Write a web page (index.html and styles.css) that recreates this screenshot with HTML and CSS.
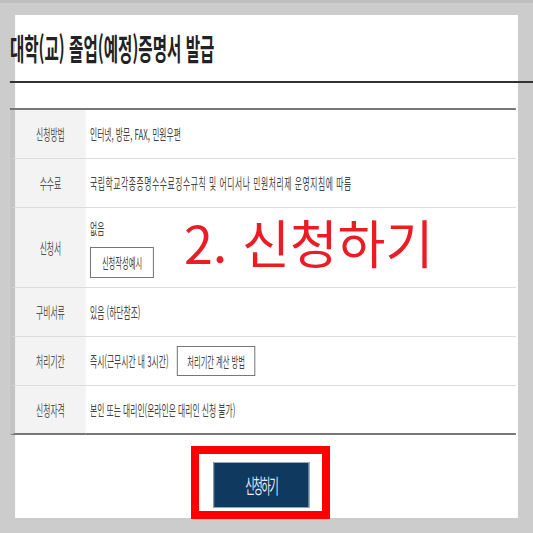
FILE: index.html
```html
<!DOCTYPE html>
<html lang="ko">
  <head>
    <meta charset="UTF-8" />
    <meta name="viewport" content="width=device-width, initial-scale=1.0" />
    <title>대학(교) 졸업(예정)증명서 발급</title>
    <link rel="stylesheet" href="styles.css">
  </head>
  <body>
    <div class="topbar"></div>

    <div class="page">
      <div class="sheet">
        <h1 class="title">대학(교) 졸업(예정)증명서 발급</h1>

        <div class="info">
          <div class="label">신청방법</div>
          <div class="value">인터넷, 방문, FAX, 민원우편</div>

          <div class="label">수수료</div>
          <div class="value value-wide">국립학교각종증명수수료징수규칙 및 어디서나 민원처리제 운영지침에 따름</div>

          <div class="label">신청서</div>
          <div class="value value-stack">
            <span>없음</span>
            <button class="small-button">신청작성예시</button>
          </div>

          <div class="label">구비서류</div>
          <div class="value">있음 (하단참조)</div>

          <div class="label">처리기간</div>
          <div class="value value-inline">
            <span>즉시(근무시간 내 3시간)</span>
            <button class="small-button">처리기간 계산 방법</button>
          </div>

          <div class="label last">신청자격</div>
          <div class="value last">본인 또는 대리인(온라인은 대리인 신청 불가)</div>
        </div>

        <div class="actions">
          <button class="apply-button">신청하기</button>
        </div>
      </div>
    </div>

    <!-- annotations drawn on top of the capture -->
    <div class="callout">2. 신청하기</div>
    <div class="highlight"></div>
  </body>
</html>
```

FILE: styles.css
```css
* {
  box-sizing: border-box;
}

html,
body {
  overflow: hidden;
}

body {
  position: relative;
  width: 533px;
  height: 533px;
  margin: 0;
  background-color: #cccccc;
  font-family: "Noto Sans CJK KR", sans-serif;
}

.topbar {
  height: 3px;
  background-color: #bfbfbf;
}

/* the capture is squeezed sideways: lay out at full width, then compress */
.page {
  width: 1025px;
  transform: scaleX(0.52);
  transform-origin: 0 0;
}

.sheet {
  width: 967px;
  height: 503px;
  margin: 12px 0 0 29px;
  background-color: #fff;
}

.title {
  margin: 0 -29px 0 -10px;
  padding: 17px 0 19px;
  font-size: 30px;
  line-height: 30px;
  font-weight: 700;
  color: #222;
  border-bottom: 2px solid #333;
}

.info {
  display: grid;
  grid-template-columns: 146px 1fr;
  width: 973px;
  margin: 25px 0 0 -10px;
  border-top: 2px solid #777;
}

.label,
.value {
  display: flex;
  align-items: center;
  min-height: 49px;
  font-size: 15px;
  line-height: 20px;
  border-bottom: 1px solid #dcdcdc;
}

.label {
  justify-content: center;
  border-left: 10px solid #c4c4c4;
  background-color: #f3f3f3;
  color: #555;
}

.value {
  padding-left: 8px;
  color: #444;
}

.value-wide {
  letter-spacing: 1.1px;
}

.value-stack {
  flex-direction: column;
  align-items: flex-start;
  justify-content: center;
  gap: 9px;
  min-height: 80px;
}

.value-inline {
  gap: 16px;
}

.label.last,
.value.last {
  border-bottom: 2px solid #777;
}

.small-button {
  height: 31px;
  padding: 0 21px;
  font-family: inherit;
  font-size: 14px;
  color: #444;
  background-color: #fff;
  border: 1px solid #777;
  border-width: 1px 2px;
}

.value-inline .small-button {
  height: 30px;
  padding: 0 18px;
}

.actions {
  display: flex;
  justify-content: center;
  margin-top: 27px;
  padding-right: 20px;
}

.apply-button {
  width: 185px;
  height: 46px;
  font-family: inherit;
  font-size: 20px;
  letter-spacing: -3px;
  color: #e4ebf2;
  background-color: #10395f;
  border: 1px solid #9aa7b4;
  border-width: 1px 2px;
}

.callout {
  position: absolute;
  left: 184px;
  top: 216px;
  font-size: 52px;
  line-height: 52px;
  color: #ec1c24;
  white-space: nowrap;
}

.highlight {
  position: absolute;
  left: 191px;
  top: 446px;
  width: 139px;
  height: 73px;
  border: 8px solid #ff0000;
}
```
